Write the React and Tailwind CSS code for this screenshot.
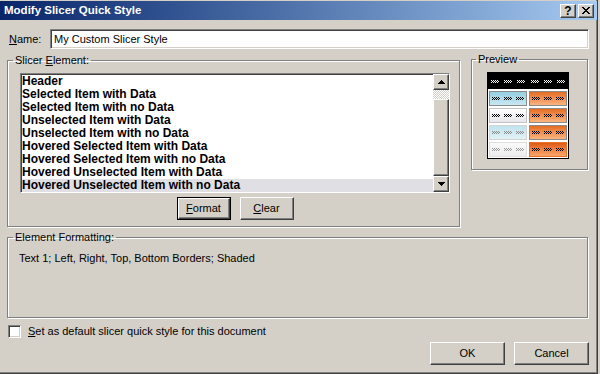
import React from "react";

const raised =
  "bg-[#d4d0c8] border border-t-white border-l-white border-r-[#404040] border-b-[#404040] shadow-[inset_-1px_-1px_0_#808080,inset_1px_1px_0_#d4d0c8]";
const sunken =
  "border border-t-[#808080] border-l-[#808080] border-r-white border-b-white shadow-[inset_1px_1px_0_#404040,inset_-1px_-1px_0_#d4d0c8]";
const etched =
  "border border-[#808080] shadow-[inset_1px_1px_0_#fff,1px_1px_0_#fff]";

function Sq({ c = "#000" }) {
  const pts = [];
  for (let y = 0; y < 3; y++) {
    for (let x = 0; x < 8; x++) {
      if ((x + y) % 2 === 0) pts.push([x, y]);
    }
  }
  return (
    <svg width="8" height="3" viewBox="0 0 8 3" shapeRendering="crispEdges" className="block">
      {pts.map(([x, y]) => (
        <rect key={x + "-" + y} x={x} y={y} width="1" height="1" fill={c} />
      ))}
    </svg>
  );
}

function Cell({ cls, c }) {
  return (
    <div className={"w-[38px] h-[15px] border flex items-center justify-between px-[2px] " + cls}>
      <Sq c={c} />
      <Sq c={c} />
      <Sq c={c} />
    </div>
  );
}

const orange = "bg-linear-to-b from-[#e46c1c] to-[#f9b47e] border-[#8a8a8a]";

function Preview() {
  return (
    <div className="w-[82px] h-[87px] border border-black bg-white flex flex-col">
      <div className="h-[16px] bg-black flex">
        <div className="w-[40px] flex items-center justify-between pl-[3px] pr-[3px]">
          <Sq c="#fff" />
          <Sq c="#fff" />
          <Sq c="#fff" />
        </div>
        <div className="w-[40px] flex items-center justify-between pl-[3px] pr-[3px]">
          <Sq c="#fff" />
          <Sq c="#fff" />
          <Sq c="#fff" />
        </div>
      </div>
      <div className="flex flex-col gap-[2px] pt-[2px] pl-[1px]">
        <div className="flex gap-[2px]">
          <Cell cls="bg-linear-to-b from-[#94cfe2] to-[#c8e7f1] border-[#8a8a8a]" c="#000" />
          <Cell cls={orange} c="#000" />
        </div>
        <div className="flex gap-[2px]">
          <Cell cls="bg-linear-to-b from-white to-[#e6e6ea] border-[#c4c4c4]" c="#000" />
          <Cell cls={orange} c="#000" />
        </div>
        <div className="flex gap-[2px]">
          <Cell cls="bg-linear-to-b from-[#bfe3ee] to-[#e2f2f7] border-[#d4d4d4]" c="#8a8a8a" />
          <Cell cls={orange} c="#000" />
        </div>
        <div className="flex gap-[2px]">
          <Cell cls="bg-linear-to-b from-[#fafafa] to-[#ececec] border-[#dedede]" c="#999" />
          <Cell cls="bg-linear-to-b from-[#df5a0e] to-[#f8a66a] border-[#e8702a]" c="#000" />
        </div>
      </div>
    </div>
  );
}

function Arrow({ up }) {
  return (
    <svg width="7" height="4" viewBox="0 0 7 4" shapeRendering="crispEdges" className="block">
      {up ? <path d="M3.5 0 L7 4 L0 4 Z" fill="#000" /> : <path d="M0 0 L7 0 L3.5 4 Z" fill="#000" />}
    </svg>
  );
}

const items = [
  "Header",
  "Selected Item with Data",
  "Selected Item with no Data",
  "Unselected Item with Data",
  "Unselected Item with no Data",
  "Hovered Selected Item with Data",
  "Hovered Selected Item with no Data",
  "Hovered Unselected Item with Data",
  "Hovered Unselected Item with no Data",
];

export default function App() {
  return (
    <div className="w-[600px] h-[374px] bg-[#d4d0c8] overflow-hidden font-['Liberation_Sans',Arial,sans-serif] text-[11px] leading-[13px] text-black">
      <div className="w-[598px] h-[374px] flex flex-col border-r border-b border-[#404040] shadow-[inset_-1px_-1px_0_#808080]">
        {/* Title bar */}
        <div className="mt-[1px] h-[19px] bg-linear-to-r from-[#0a246a] to-[#a6caf0] flex items-center justify-between pl-[4px] pr-[3px]">
          <span className="text-white font-bold text-[11.5px]">Modify Slicer Quick Style</span>
          <div className="flex gap-[2px]">
            <div className={"w-[16px] h-[14px] flex items-center justify-center " + raised}>
              <span className="font-bold text-[12px] leading-[12px]">?</span>
            </div>
            <div className={"w-[16px] h-[14px] flex items-center justify-center " + raised}>
              <svg width="8" height="7" viewBox="0 0 8 7" shapeRendering="crispEdges">
                <path d="M0 0h2l2 2.5L6 0h2L5 3.5 8 7H6L4 4.5 2 7H0l3-3.5z" fill="#000" />
              </svg>
            </div>
          </div>
        </div>

        {/* Body */}
        <div className="flex flex-col pl-[7px] pr-[8px]">
          {/* Name row */}
          <div className="mt-[9px] flex items-center">
            <span className="w-[41px] ml-[2px]">
              <span className="underline">N</span>ame:
            </span>
            <div className={"flex-1 h-[20px] bg-white flex items-center pl-[3px] " + sunken}>
              My Custom Slicer Style
            </div>
          </div>

          {/* Slicer + Preview */}
          <div className="mt-[5px] flex items-start">
            <fieldset className={"w-[453px] h-[173px] " + etched}>
              <legend className="ml-[5px] px-[2px] leading-[13px]">
                Slicer <span className="underline">E</span>lement:
              </legend>
              <div className="flex flex-col pt-[6px] pl-[12px]">
                <div className={"w-[430px] h-[120px] bg-white flex " + sunken}>
                  <div className="flex-1 overflow-hidden pl-[1px] pt-[1px]">
                    {items.map((t, i) => (
                      <div
                        key={t}
                        className={
                          "h-[13px] flex items-center font-bold text-[12px] whitespace-nowrap " +
                          (i === items.length - 1 ? "bg-[#e0dfe3]" : "")
                        }
                      >
                        {t}
                      </div>
                    ))}
                  </div>
                  <div className="w-[16px] flex flex-col">
                    <div className={"h-[16px] flex items-center justify-center " + raised}>
                      <Arrow up />
                    </div>
                    <div className="h-[9px] bg-[repeating-conic-gradient(#fff_0_25%,#d4d0c8_0_50%)] bg-[length:2px_2px]" />
                    <div className={"flex-1 " + raised} />
                    <div className={"h-[16px] flex items-center justify-center " + raised}>
                      <Arrow />
                    </div>
                  </div>
                </div>
                <div className="w-[430px] mt-[4px] flex justify-center gap-[9px]">
                  <div className="w-[54px] h-[23px] border border-black flex">
                    <div className={"flex-1 flex items-center justify-center " + raised}>
                      <span>
                        <span className="underline">F</span>ormat
                      </span>
                    </div>
                  </div>
                  <div className={"w-[54px] h-[23px] flex items-center justify-center " + raised}>
                    <span>
                      <span className="underline">C</span>lear
                    </span>
                  </div>
                </div>
              </div>
            </fieldset>

            <fieldset className={"ml-[11px] -mt-[1px] w-[117px] h-[117px] " + etched}>
              <legend className="ml-[4px] px-[2px] leading-[13px]">Preview</legend>
              <div className="pt-[6px] pl-[15px]">
                <Preview />
              </div>
            </fieldset>
          </div>

          {/* Element formatting */}
          <fieldset className={"mt-[4px] w-[581px] h-[87px] " + etched}>
            <legend className="ml-[5px] px-[2px] leading-[13px]">Element Formatting:</legend>
            <div className="pt-[8px] pl-[11px]">Text 1; Left, Right, Top, Bottom Borders; Shaded</div>
          </fieldset>

          {/* Checkbox */}
          <div className="mt-[7px] flex items-center ml-[1px]">
            <div className={"w-[13px] h-[13px] bg-white " + sunken} />
            <span className="ml-[7px]">
              <span className="underline">S</span>et as default slicer quick style for this document
            </span>
          </div>

          {/* Buttons */}
          <div className="mt-[4px] flex justify-end gap-[9px]">
            <div className={"w-[75px] h-[23px] flex items-center justify-center " + raised}>OK</div>
            <div className={"w-[75px] h-[23px] flex items-center justify-center " + raised}>Cancel</div>
          </div>
        </div>
      </div>
    </div>
  );
}
